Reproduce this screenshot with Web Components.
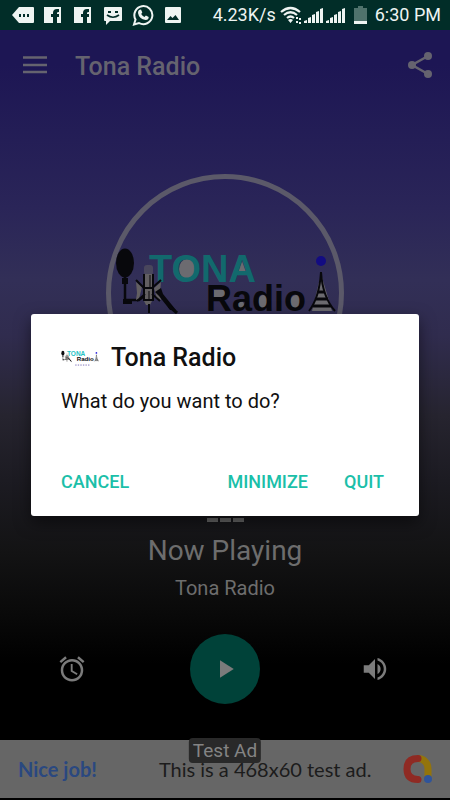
<!DOCTYPE html>
<html lang="en">
<head>
<meta charset="utf-8">
<meta name="viewport" content="width=device-width, initial-scale=1">
<title>Tona Radio</title>
<style>
body { margin: 0; background: #000; font-family: Roboto, "Liberation Sans", sans-serif; }
</style>
</head>
<body>
<radio-app></radio-app>
<script>
const define = (name, html) => {
  const template = document.createElement('template');
  template.innerHTML = html;
  customElements.define(name, class extends HTMLElement {
    constructor() {
      super();
      this.attachShadow({ mode: 'open' }).append(template.content.cloneNode(true));
    }
  });
};

define('tona-logo', `
<style>
:host { display: block; }
svg { display: block; width: 100%; height: auto; }
text { font-family: "Liberation Sans", Arial, sans-serif; font-weight: 700; }
.fill { fill: var(--logo-fill, #fff); }
.teal { fill: var(--logo-teal, #1fc2c4); }
.ink { fill: var(--logo-ink, #0b0b0e); }
.line { stroke: var(--logo-ink, #0b0b0e); fill: none; }
.metal { fill: var(--logo-metal, #b8b4ac); }
.blue { fill: var(--logo-blue, #2a22e0); }
.dots { stroke: var(--logo-dots, #6d5fb0); }
</style>
<svg viewBox="-1 -2 222 98" aria-hidden="true">
  <ellipse class="fill" cx="72" cy="23" rx="8" ry="10"/>
  <path class="fill" d="M127 15l5 14h-10z"/>
  <ellipse class="fill" cx="125" cy="59" rx="4" ry="4"/>
  <ellipse class="fill" cx="148" cy="56" rx="5" ry="7"/>
  <ellipse class="fill" cx="181" cy="56" rx="6" ry="7"/>
  <path class="fill" d="M99 44h11v8h-11z"/>
  <text class="teal" x="34" y="36" font-size="38">TONA</text>
  <text class="ink" x="91" y="65" font-size="36">Radio</text>
  <path class="fill" d="M206 28l-9 37h20z"/>
  <path class="line" d="M206 26c-1 16-5 30-12 39M206 26c1 16 6 30 14 39" stroke-width="2"/>
  <path class="line" d="M203 46h7M201 53h12M198 60h18" stroke-width="3"/>
  <circle class="blue" cx="206" cy="15" r="5"/>
  <ellipse class="ink" cx="10" cy="17" rx="9" ry="14.500"/>
  <path class="line" d="M10 31v23h14l5-4" stroke-width="2.500"/>
  <path class="ink" d="M7 32h6v6h-6zM8 53h9v5h-9z"/>
  <path class="metal" d="M21 36l6 5-3 12-3 1 1-7zM46 36l-7 6 3 11 4 1-1-7z"/>
  <rect class="metal" x="29" y="19" width="9" height="10" rx="3" opacity=".5"/>
  <path class="metal" d="M29 28h8v27l-2 4h-4l-2-4z"/>
  <path class="line" d="M21 34l8 8M46 34l-9 8M22 55l8-7M45 55l-8-7M29 28v27M38 28v27M29 42h9M29 54h9M34 58v9" stroke-width="2"/>
  <path class="line" d="M35 29v12M34 45v8" stroke-width="1"/>
  <path class="ink" d="M40 46l6-4 2 6 13 16h-6l-11-14z"/>
  <path class="line" d="M54 60l8 7" stroke-width="3"/>
  <path class="dots" d="M82 86h88" stroke-width="5" stroke-dasharray="8 7"/>
</svg>`);

define('status-bar', `
<style>
:host { display: flex; align-items: center; height: 30px; padding: 0 9px 0 12px; background: #012d28; color: #eef4f2; font-size: 18px; line-height: 24px; }
svg { display: block; fill: currentColor; }
.notes { display: flex; align-items: center; gap: 8px; flex: 1; }
.system { display: flex; align-items: center; gap: 4px; white-space: nowrap; }
.wifi { margin-right: -2px; }
.battery { margin: 0 4px; }
</style>
<div class="notes">
  <svg width="22" height="22" viewBox="0 0 22 22"><path fill-rule="evenodd" d="M7 3h14q1 0 1 1v14q0 1-1 1H7L0 11zM7 10v3h2v-3zm4 0v3h2v-3zm4 0v3h2v-3z"/></svg>
  <svg width="22" height="22" viewBox="0 0 22 22"><path fill-rule="evenodd" d="M2 3h17v16h-4v-6h2v-3h-2V9q0-1 2-1V5h-2q-4 0-4 4v1H9v3h2v6H2z"/></svg>
  <svg width="22" height="22" viewBox="0 0 22 22"><path fill-rule="evenodd" d="M2 3h17v16h-4v-6h2v-3h-2V9q0-1 2-1V5h-2q-4 0-4 4v1H9v3h2v6H2z"/></svg>
  <svg width="22" height="22" viewBox="0 0 22 22"><path d="M3 3h16q1 0 1 1v12q0 1-1 1H8l-4 4v-4H3q-1 0-1-1V4q0-1 1-1z"/><path fill="#012d28" d="M6 7h3v2H6zM13 7h3v2h-3z"/><path d="M5 11q6 4.500 12 0" fill="none" stroke="#012d28" stroke-width="1.600"/></svg>
  <svg width="22" height="22" viewBox="0 0 22 22"><path d="M2 20.500l1.500-5A9 9 0 1 1 7 19z" fill="none" stroke="currentColor" stroke-width="2"/><path d="M7 6l2-.5 1.300 3L9.200 10q1.200 2 3.200 3l1.500-1.500 2.800 1.400q0 3-3 3Q7 15 6 9q0-2 1-3z"/></svg>
  <svg width="22" height="22" viewBox="0 0 22 22"><path fill-rule="evenodd" d="M4 3h14q1 0 1 1v14q0 1-1 1H4q-1 0-1-1V4q0-1 1-1zM5 16h12l-3.500-5-3 3-2-2z"/></svg>
</div>
<div class="system">
  <span>4.23K/s</span>
  <svg class="wifi" width="22" height="20" viewBox="0 0 22 20"><g fill="none" stroke="currentColor" stroke-width="2.200"><path d="M1 7q9.500-8 19 0M4 10q6.500-5.500 13 0M7 13q3.500-3 7 0"/></g><path d="M8 15q2.500-2 5 0l-2.500 3zM16 12h2v2h-2zM19 13h2v2h-2zM19 17h2v2h-2zM16 16h2v2h-2z"/></svg>
  <svg width="42" height="18" viewBox="0 0 42 18"><path d="M0 17v-2l3-1v3zM4 17v-5l3-1v6zM8 17V9l3-1v9zM12 17V6l3-1v12zM16 17V3l3-1v15zM22 17v-2l3-1v3zM26 17v-5l3-1v6zM30 17V9l3-1v9zM34 17V6l3-1v12zM38 17V3l3-1v15z"/></svg>
  <svg class="battery" width="13" height="20" viewBox="0 0 13 20"><path fill="#4f726c" d="M4 1h5v2h4v13H0V3h4z"/><path d="M0 16h13v3H0z"/></svg>
  <span>6:30 PM</span>
</div>`);

define('app-header', `
<style>
:host { display: flex; align-items: center; height: 70px; padding: 0 16px 0 20px; color: #65636f; }
h1 { flex: 1; margin: 0 0 0 25px; padding-top: 3px; font-size: 25px; line-height: 32px; font-weight: 500; }
button { display: block; padding: 0; border: 0; background: none; color: inherit; }
svg { display: block; }
</style>
<button type="button" aria-label="Menu"><svg width="30" height="30" viewBox="0 0 30 30"><path d="M3 7.500h24M3 15h24M3 22h24" stroke="currentColor" stroke-width="2.400"/></svg></button>
<h1><slot></slot></h1>
<button type="button" aria-label="Share"><svg width="28" height="30" viewBox="0 0 28 30" fill="currentColor"><circle cx="6" cy="15" r="4"/><circle cx="22" cy="6" r="4"/><circle cx="22" cy="24" r="4"/><path d="M22 6L6 15l16 9" fill="none" stroke="currentColor" stroke-width="2.500"/></svg></button>`);

define('now-playing', `
<style>
:host { display: flex; flex-direction: column; align-items: center; color: #6d6d6d; text-align: center; }
.disc { display: flex; align-items: center; justify-content: center; box-sizing: border-box; width: 238px; height: 238px; border: 5px solid #5b5969; border-radius: 50%; }
tona-logo { flex: none; width: 222px; --logo-fill: #6c6b70; --logo-teal: #12696d; --logo-ink: #08080c; --logo-metal: #625f61; --logo-blue: #130c82; --logo-dots: #2d2860; }
.bars { display: flex; gap: 2px; margin-top: 106px; }
.bars i { width: 11px; height: 4px; background: #666; }
h2 { margin: 12px 0 0; font-size: 28px; line-height: 34px; font-weight: 400; }
p { margin: 8px 0 0; font-size: 20px; line-height: 24px; }
</style>
<div class="disc"><tona-logo></tona-logo></div>
<div class="bars"><i></i><i></i><i></i></div>
<h2>Now Playing</h2>
<p><slot></slot></p>`);

define('player-controls', `
<style>
:host { display: flex; align-items: center; justify-content: space-between; padding: 0 60px; color: #7b7b7b; }
button { display: flex; align-items: center; justify-content: center; width: 30px; height: 30px; padding: 0; border: 0; background: none; color: inherit; flex: none; }
.timer { margin-left: -3px; margin-right: 3px; }
.play { width: 70px; height: 70px; border-radius: 50%; background: #004239; }
svg { display: block; width: 30px; height: 30px; fill: currentColor; }
</style>
<button class="timer" type="button" aria-label="Sleep timer"><svg viewBox="0 0 24 24"><path d="M22 5.720l-4.600-3.860-1.290 1.530 4.600 3.860L22 5.720zM7.880 3.390L6.600 1.860 2 5.710l1.290 1.530 4.590-3.850zM12.500 8H11v6l4.750 2.850.75-1.230-4-2.370V8zM12 4c-4.970 0-9 4.030-9 9s4.020 9 9 9a9 9 0 0 0 0-18zm0 16c-3.870 0-7-3.130-7-7s3.130-7 7-7 7 3.130 7 7-3.130 7-7 7z"/></svg></button>
<button class="play" type="button" aria-label="Play"><svg viewBox="0 0 24 24"><path d="M8 5v14l11-7z"/></svg></button>
<button type="button" aria-label="Volume"><svg viewBox="0 0 24 24"><path d="M3 9v6h4l5 5V4L7 9H3zm13.500 3A4.500 4.500 0 0 0 14 7.970v8.050c1.480-.73 2.500-2.250 2.500-4.020zM14 3.230v2.060c2.890.86 5 3.540 5 6.710s-2.110 5.850-5 6.710v2.060c4.010-.91 7-4.490 7-8.770s-2.990-7.860-7-8.770z"/></svg></button>`);

define('ad-banner', `
<style>
:host { display: block; position: relative; padding-bottom: 2px; }
a { display: flex; align-items: center; height: 58px; padding: 0 17px 0 18px; background: #666; color: #1c1c1c; font-family: Lato, Roboto, sans-serif; font-size: 20px; line-height: 24px; text-decoration: none; }
b { color: #2a4880; font-weight: 700; }
.copy { flex: 1; margin-left: 62px; white-space: nowrap; }
svg { display: block; flex: none; }
.tag { position: absolute; top: -2px; left: 50%; transform: translateX(-50%); padding: 0 4px; border-radius: 4px; background: #292929; color: #848484; font-size: 19px; line-height: 25px; white-space: nowrap; }
</style>
<a href="#"><b>Nice job!</b><span class="copy">This is a 468x60 test ad.</span>
<svg width="32" height="32" viewBox="0 0 32 32" fill="none" stroke-width="7"><path stroke="#93740b" d="M17 5.500a10 10 0 0 1 10 10.500v8"/><path stroke="#8f2a23" stroke-linecap="round" d="M17 5.500q-11 0-11 10.500t11 10.500"/><circle cx="27" cy="26" r="4" fill="#2f549a"/></svg></a>
<span class="tag">Test Ad</span>`);

define('quit-dialog', `
<style>
:host { display: block; }
dialog { position: absolute; inset: 314px 31px auto; box-sizing: border-box; width: auto; margin: 0; padding: 28px 30px 16px; border: 0; border-radius: 3px; background: #fff; color: #101010; box-shadow: 0 6px 16px rgba(0,0,0,.5); }
header { display: flex; align-items: center; gap: 12px; }
tona-logo { flex: none; width: 38px; }
h2 { margin: 0; font-size: 25px; line-height: 32px; font-weight: 500; }
p { margin: 14px 0 0; font-size: 20px; line-height: 26px; }
footer { display: flex; gap: 36px; margin-top: 50px; padding-right: 5px; }
button { padding: 0; border: 0; background: none; color: #1bbfa9; font: 500 18px/36px Roboto, sans-serif; }
.cancel { margin-right: auto; }
</style>
<dialog open aria-labelledby="title">
  <header><tona-logo></tona-logo><h2 id="title"><slot></slot></h2></header>
  <p>What do you want to do?</p>
  <footer><button class="cancel" type="button">CANCEL</button><button type="button">MINIMIZE</button><button type="button">QUIT</button></footer>
</dialog>`);

define('radio-app', `
<style>
:host { position: relative; display: flex; flex-direction: column; min-height: 100vh; background: linear-gradient(#1d1654 0, #1d1654 8%, #2a2558 26%, #322f57 35%, #302c4e 42%, #26242f 52%, #1c1b22 60%, #131314 69%, #0a0a0a 76%, #000 83%); }
now-playing { margin-top: 74px; }
player-controls { margin: 34px 0; }
ad-banner { margin-top: auto; }
</style>
<status-bar></status-bar>
<app-header>Tona Radio</app-header>
<now-playing>Tona Radio</now-playing>
<player-controls></player-controls>
<ad-banner></ad-banner>
<quit-dialog>Tona Radio</quit-dialog>`);
</script>
</body>
</html>
